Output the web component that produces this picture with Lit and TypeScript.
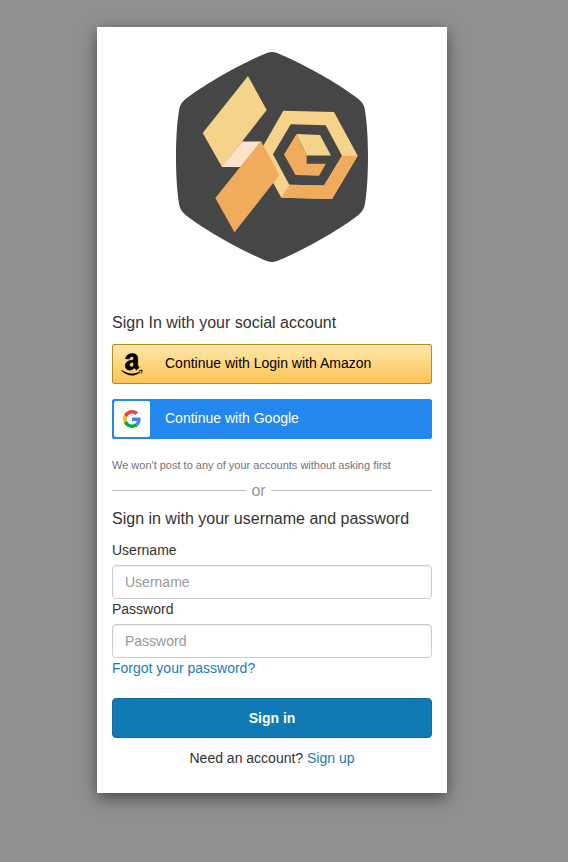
import { LitElement, html, css, svg } from "lit";
import { customElement } from "lit/decorators.js";

const logo = svg`
  <svg class="logo" viewBox="176 52 192 210" role="img" aria-label="Logo">
    <path fill="#464646" d="M267 53Q272 51 277 53C298 61 340 84 359 99.500Q363.500 103.500 364.500 108C366.500 118 368 135 368 157C368 179 366.500 196 364.500 206Q363.500 210.500 359 214.500C340 230 298 253 277 261Q272 263 267 261C246 253 204 230 185 214.500Q180.500 210.500 179.500 206C177.500 196 176 179 176 157C176 135 177.500 118 179.500 108Q180.500 103.500 185 99.500C204 84 246 61 267 53Z"/>
    <path fill="#f5d38a" d="M248 76L266.700 110L222 167L202.700 133Z"/>
    <path fill="#ffe2cc" d="M242 141.500H261L241 167H221.700Z"/>
    <path fill="#f5d38a" fill-rule="evenodd" d="M283.300 110.700L334 112L357.700 155.700L332 199L281.300 197.700L258 155ZM290.700 124.300L273 154.300L289.300 184.700L324 185.500L342 155.700L325.700 125.300Z"/>
    <path fill="#f0ac5c" d="M289.300 184.700L281.300 197.700L332 199L357.700 155.700H342L324 185.500Z"/>
    <path fill="#f0ac5c" d="M261 141L279.500 175L234.500 232.300L215.300 198Z"/>
    <path fill="#f5d38a" d="M296.500 134L320 135L331 155.400H306.700Z"/>
    <path fill="#f0ac5c" d="M296.500 134L284 154.500L295.500 175L319 175.700L326 163.700H306.700V155.400Z"/>
  </svg>`;

const amazonIcon = svg`
  <svg class="amazon-icon" viewBox="0 0 448 512" aria-hidden="true">
    <path stroke="#000" stroke-width="12" d="M257.200 162.700c-48.700 1.800-169.500 15.500-169.500 117.500 0 109.500 138.300 114 183.500 43.200 6.500 10.200 35.400 37.500 45.300 46.800l56.800-56S341 288.900 341 261.400V114.300C341 89 316.500 32 228.700 32 140.700 32 94 87 94 136.300l73.500 6.800c16.300-49.500 54.200-49.500 54.200-49.500 40.700-.1 35.500 29.800 35.500 69.100zm0 86.800c0 80-84.200 68-84.200 17.200 0-47.200 50.500-56.700 84.200-57.800v40.600z"/>
    <path d="M393.200 413c-7.700 10-70 67-174.500 67S34.200 408.500 9.700 379c-6.800-7.700 1-11.300 5.500-8.300C88.500 415.200 203 488.500 387.700 401c7.500-3.700 13.300 2 5.500 12zm39.800 2.200c-6.500 15.800-16 26.800-21.200 31-5.500 4.500-9.500 2.700-6.500-3.800s19.300-46.500 12.700-55c-6.500-8.300-37-4.300-48-3.200-10.800 1-13 2-14-.3-2.300-5.700 21.700-15.500 37.500-17.500 15.700-1.800 41-.8 46 5.700 3.700 5.100 0 27.100-6.500 43.100z"/>
  </svg>`;

const googleIcon = svg`
  <svg class="google-icon" viewBox="0 0 48 48" aria-hidden="true">
    <path fill="#ea4335" d="M24 9.500c3.540 0 6.710 1.220 9.210 3.600l6.850-6.850C35.900 2.380 30.470 0 24 0 14.620 0 6.510 5.380 2.560 13.220l7.980 6.190C12.430 13.720 17.740 9.500 24 9.500z"/>
    <path fill="#4285f4" d="M46.980 24.550c0-1.570-.15-3.090-.38-4.550H24v9.020h12.940c-.58 2.960-2.260 5.480-4.780 7.180l7.730 6c4.510-4.180 7.090-10.360 7.090-17.650z"/>
    <path fill="#fbbc05" d="M10.530 28.590c-.48-1.450-.76-2.990-.76-4.590s.27-3.140.76-4.590l-7.980-6.190C.920 16.460 0 20.120 0 24c0 3.880.920 7.540 2.560 10.780l7.970-6.190z"/>
    <path fill="#00ac47" d="M24 48c6.480 0 11.930-2.130 15.890-5.810l-7.730-6c-2.150 1.450-4.920 2.300-8.160 2.300-6.260 0-11.570-4.220-13.470-9.910l-7.980 6.190C6.510 42.620 14.620 48 24 48z"/>
  </svg>`;

@customElement("app-root")
export class AppRoot extends LitElement {
  static styles = css`
    :host {
      display: flex;
      justify-content: center;
      align-items: flex-start;
      box-sizing: border-box;
      min-height: 100vh;
      padding: 27px 24px 27px 0;
      background: #909090;
      color: #333;
      font: 14px/20px "Liberation Sans", Arial, sans-serif;
    }
    * {
      box-sizing: border-box;
    }
    .card {
      width: 100%;
      max-width: 350px;
      padding: 25px 15px;
      background: #fff;
      box-shadow: 0 5px 15px rgba(0, 0, 0, 0.5);
    }
    .logo {
      display: block;
      width: 192px;
      height: 210px;
      margin: 0 auto 49px;
    }
    .title {
      margin: 0;
      font-size: 16px;
      line-height: 24px;
      font-weight: 400;
    }
    .social {
      display: flex;
      align-items: center;
      width: 100%;
      height: 40px;
      margin: 0 0 15px;
      padding: 0 1px;
      border: 1px solid;
      border-radius: 2px;
      font: inherit;
      text-align: left;
      cursor: pointer;
    }
    .social .badge {
      display: flex;
      align-items: center;
      justify-content: center;
      width: 36px;
      height: 36px;
      margin-right: 15px;
      border-radius: 2px;
    }
    .social .caption {
      padding-bottom: 2px;
    }
    .amazon {
      margin-top: 9px;
      border-color: #b38b22;
      background: linear-gradient(#ffe8ab, #fcc454);
      color: #000;
    }
    .google {
      border-color: #2388ed;
      background: #2388ed;
      color: #fff;
    }
    .google .badge {
      background: #fff;
    }
    .amazon-icon {
      width: 22px;
      height: 25px;
    }
    .google-icon {
      width: 18px;
      height: 18px;
    }
    .note {
      display: block;
      margin-top: 16px;
      color: #737373;
      font-size: 11px;
    }
    .divider {
      display: grid;
      grid-template-columns: 42% auto 1fr;
      align-items: center;
      column-gap: 5px;
      margin: 4px 0 5px;
      color: #999;
      font-size: 16px;
      line-height: 23px;
    }
    .divider::before,
    .divider::after {
      content: "";
      height: 1px;
      background: #bbb;
    }
    label {
      display: block;
      margin-bottom: 5px;
    }
    .first {
      margin-top: 9px;
    }
    .field {
      display: block;
      width: 100%;
      height: 34px;
      padding: 6px 12px;
      border: 1px solid #ccc;
      border-radius: 4px;
      background: #fff;
      box-shadow: inset 0 1px 1px rgba(0, 0, 0, 0.075);
      color: #555;
      font: inherit;
    }
    .field::placeholder {
      color: #999;
      opacity: 1;
    }
    a {
      color: #1a7bb8;
      text-decoration: none;
    }
    .submit {
      display: block;
      width: 100%;
      height: 40px;
      margin: 20px 0 10px;
      border: 1px solid #0e6c9f;
      border-radius: 4px;
      background: #107ab4;
      color: #fff;
      font: inherit;
      font-weight: 700;
      cursor: pointer;
    }
    .signup {
      margin: 0;
      text-align: center;
    }
  `;

  render() {
    return html`
      <main class="card">
        ${logo}
        <h1 class="title">Sign In with your social account</h1>
        <button class="social amazon" type="button">
          <span class="badge">${amazonIcon}</span>
          <span class="caption">Continue with Login with Amazon</span>
        </button>
        <button class="social google" type="button">
          <span class="badge">${googleIcon}</span>
          <span class="caption">Continue with Google</span>
        </button>
        <small class="note">We won't post to any of your accounts without asking first</small>
        <div class="divider">or</div>
        <form @submit=${(e: Event) => e.preventDefault()}>
          <h2 class="title">Sign in with your username and password</h2>
          <label class="first" for="username">Username</label>
          <input class="field" id="username" type="text" placeholder="Username" autocomplete="username" />
          <label for="password">Password</label>
          <input class="field" id="password" type="password" placeholder="Password" autocomplete="current-password" />
          <a href="#forgot">Forgot your password?</a>
          <button class="submit" type="submit">Sign in</button>
          <p class="signup">Need an account? <a href="#signup">Sign up</a></p>
        </form>
      </main>
    `;
  }
}
